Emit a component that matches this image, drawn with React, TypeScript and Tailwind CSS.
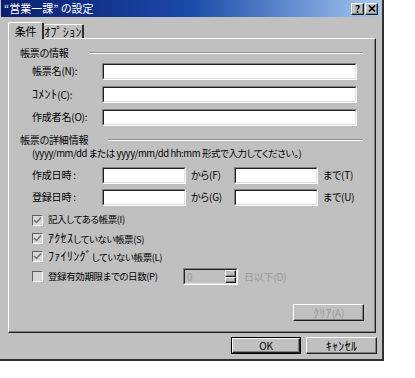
import React from "react";

const font = { fontFamily: '"Noto Sans CJK JP", "Noto Sans", sans-serif' };

function Sunken({ className = "", children }: { className?: string; children?: React.ReactNode }) {
    return (
        <div className={`border border-t-[#808080] border-l-[#808080] border-r-white border-b-white ${className}`}>
            <div className="h-full w-full border border-t-[#202020] border-l-[#202020] border-r-[#dfdfdf] border-b-[#dfdfdf] bg-white flex items-center">
                {children}
            </div>
        </div>
    );
}

function Raised({ className = "", children, disabled = false }: { className?: string; children?: React.ReactNode; disabled?: boolean }) {
    return (
        <div className={`border border-t-white border-l-white border-r-[#202020] border-b-[#202020] bg-[#c0c0c0] shadow-[inset_-1px_-1px_#808080] flex items-center justify-center ${disabled ? "text-[#9a9a9a]" : "text-black"} ${className}`}>
            {children}
        </div>
    );
}

// half-width katakana: Noto draws them narrow, so bump the size
function Kana({ children }: { children: React.ReactNode }) {
    return <span className="text-[12px] tracking-[0.3px] leading-none">{children}</span>;
}

function GroupHeader({ label }: { label: string }) {
    return (
        <div className="flex items-center h-[14px] pl-[11px] pr-[12px]">
            <span className="leading-none">{label}</span>
            <div className="flex-1 ml-[20px] border-t border-t-[#909090] border-b border-b-white h-[2px]" />
        </div>
    );
}

function TextRow({ label }: { label: React.ReactNode }) {
    return (
        <div className="flex items-center h-[16px] pl-[23px] pr-[18px]">
            <span className="w-[70px] leading-none">{label}</span>
            <Sunken className="flex-1 h-[17px]" />
        </div>
    );
}

function DateRow({ label, from, to }: { label: string; from: string; to: string }) {
    return (
        <div className="flex items-center h-[16px] pl-[23px]">
            <span className="w-[70px] leading-none">{label}</span>
            <Sunken className="w-[84px] h-[17px]" />
            <span className="ml-[5px] w-[43px] leading-none">{from}</span>
            <Sunken className="w-[84px] h-[17px]" />
            <span className="ml-[5px] leading-none">{to}</span>
        </div>
    );
}

function Check({ label, checked }: { label: React.ReactNode; checked: boolean }) {
    return (
        <div className="flex items-center h-[16px] pl-[23px]">
            <div className="w-[11px] h-[11px] border border-t-[#606060] border-l-[#606060] border-r-white border-b-white bg-[#d8d8d8] flex items-center justify-center">
                {checked && (
                    <svg width="9" height="9" viewBox="0 0 9 9">
                        <path d="M1 4 L3.5 6.5 L8 1.5" fill="none" stroke="#707070" strokeWidth="1.5" />
                    </svg>
                )}
            </div>
            <span className="ml-[5px] leading-none text-[9.5px] tracking-[-0.4px]">{label}</span>
        </div>
    );
}

export default function App() {
    return (
        <div className="w-[415px] h-[378px] bg-white text-[10px] text-black whitespace-nowrap [font-feature-settings:'palt'] tracking-[-0.2px]" style={font}>
            <div className="w-[384px] h-[361px] bg-[#c0c0c0] border-r-[2px] border-r-[#303030] border-b-[2px] border-b-[#303030] flex flex-col">
                {/* Title bar */}
                <div className="h-[17px] mx-[1px] bg-gradient-to-r from-[#0a1e70] via-[#1c4aa8] to-[#a6caf0] flex items-center pl-[3px] pr-[3px]">
                    <span className="text-white text-[11px] leading-none tracking-normal">“営業一課” の設定</span>
                    <div className="flex-1" />
                    <Raised className="w-[13px] h-[12px] text-[10px] font-bold leading-none">?</Raised>
                    <Raised className="w-[13px] h-[12px] ml-[1px]">
                        <svg width="8" height="7" viewBox="0 0 8 7">
                            <path d="M1 0.5 L7 6.5 M7 0.5 L1 6.5" stroke="black" strokeWidth="1.6" />
                        </svg>
                    </Raised>
                </div>

                {/* Tabs */}
                <div className="flex items-end h-[21px] pl-[8px]">
                    <div className="h-[17px] w-[36px] border-t border-l border-t-white border-l-white border-r-[2px] border-r-[#303030] rounded-t-[2px] flex items-center justify-center relative top-[1px] bg-[#c0c0c0] z-10">
                        <span className="leading-none text-[11px]">条件</span>
                    </div>
                    <div className="h-[14px] w-[40px] border-t border-t-white border-r-[2px] border-r-[#303030] rounded-t-[2px] flex items-center justify-center">
                        <Kana>ｵﾌﾟｼｮﾝ</Kana>
                    </div>
                </div>

                {/* Panel */}
                <div className="ml-[8px] w-[368px] h-[295px] border border-t-white border-l-white border-r-[#202020] border-b-[#202020] shadow-[inset_-1px_-1px_#808080] flex flex-col">
                    <div className="mt-[7px]">
                        <GroupHeader label="帳票の情報" />
                    </div>
                    <div className="mt-[3px]"><TextRow label="帳票名(N):" /></div>
                    <div className="mt-[7px]"><TextRow label={<><Kana>ｺﾒﾝﾄ</Kana>(C):</>} /></div>
                    <div className="mt-[7px]"><TextRow label="作成者名(O):" /></div>

                    <div className="mt-[8px]">
                        <GroupHeader label="帳票の詳細情報" />
                    </div>
                    <div className="h-[14px] pl-[23px] flex items-center">
                        <span className="leading-none text-[9.5px] tracking-[-0.4px]">(yyyy/mm/dd または yyyy/mm/dd hh:mm 形式で入力してください。)</span>
                    </div>
                    <div className="mt-[6px]"><DateRow label="作成日時 :" from="から(F)" to="まで(T)" /></div>
                    <div className="mt-[6px]"><DateRow label="登録日時 :" from="から(G)" to="まで(U)" /></div>

                    <div className="mt-[7px]"><Check label="記入してある帳票(I)" checked /></div>
                    <div className="mt-[2px]"><Check label={<><Kana>ｱｸｾｽ</Kana>していない帳票(S)</>} checked /></div>
                    <div className="mt-[2px]"><Check label={<><Kana>ﾌｧｲﾘﾝｸﾞ</Kana>していない帳票(L)</>} checked /></div>
                    <div className="mt-[4px] flex items-center">
                        <div className="w-[174px]">
                            <Check label="登録有効期限までの日数(P)" checked={false} />
                        </div>
                        <div className="w-[55px] h-[17px] border border-t-[#808080] border-l-[#808080] border-r-white border-b-white">
                            <div className="h-full w-full border border-t-[#202020] border-l-[#202020] border-r-[#dfdfdf] border-b-[#dfdfdf] bg-[#c0c0c0] flex items-stretch">
                                <span className="flex-1 pl-[2px] text-[#9a9a9a] leading-[13px]">0</span>
                                <div className="w-[11px] flex flex-col">
                                    <Raised className="flex-1" />
                                    <Raised className="flex-1" />
                                </div>
                            </div>
                        </div>
                        <span className="ml-[6px] text-[#9a9a9a] leading-none">日以下(D)</span>
                    </div>

                    <div className="mt-[19px] flex justify-end pr-[11px]">
                        <Raised disabled className="w-[71px] h-[17px] leading-none"><Kana>ｸﾘｱ</Kana>(A)</Raised>
                    </div>
                </div>

                {/* Bottom buttons */}
                <div className="flex justify-end gap-[5px] pr-[5px] mt-[4px]">
                    <div className="border border-black">
                        <Raised className="w-[68px] h-[15px] leading-none">OK</Raised>
                    </div>
                    <Raised className="w-[71px] h-[17px] leading-none"><Kana>ｷｬﾝｾﾙ</Kana></Raised>
                </div>
            </div>
        </div>
    );
}
